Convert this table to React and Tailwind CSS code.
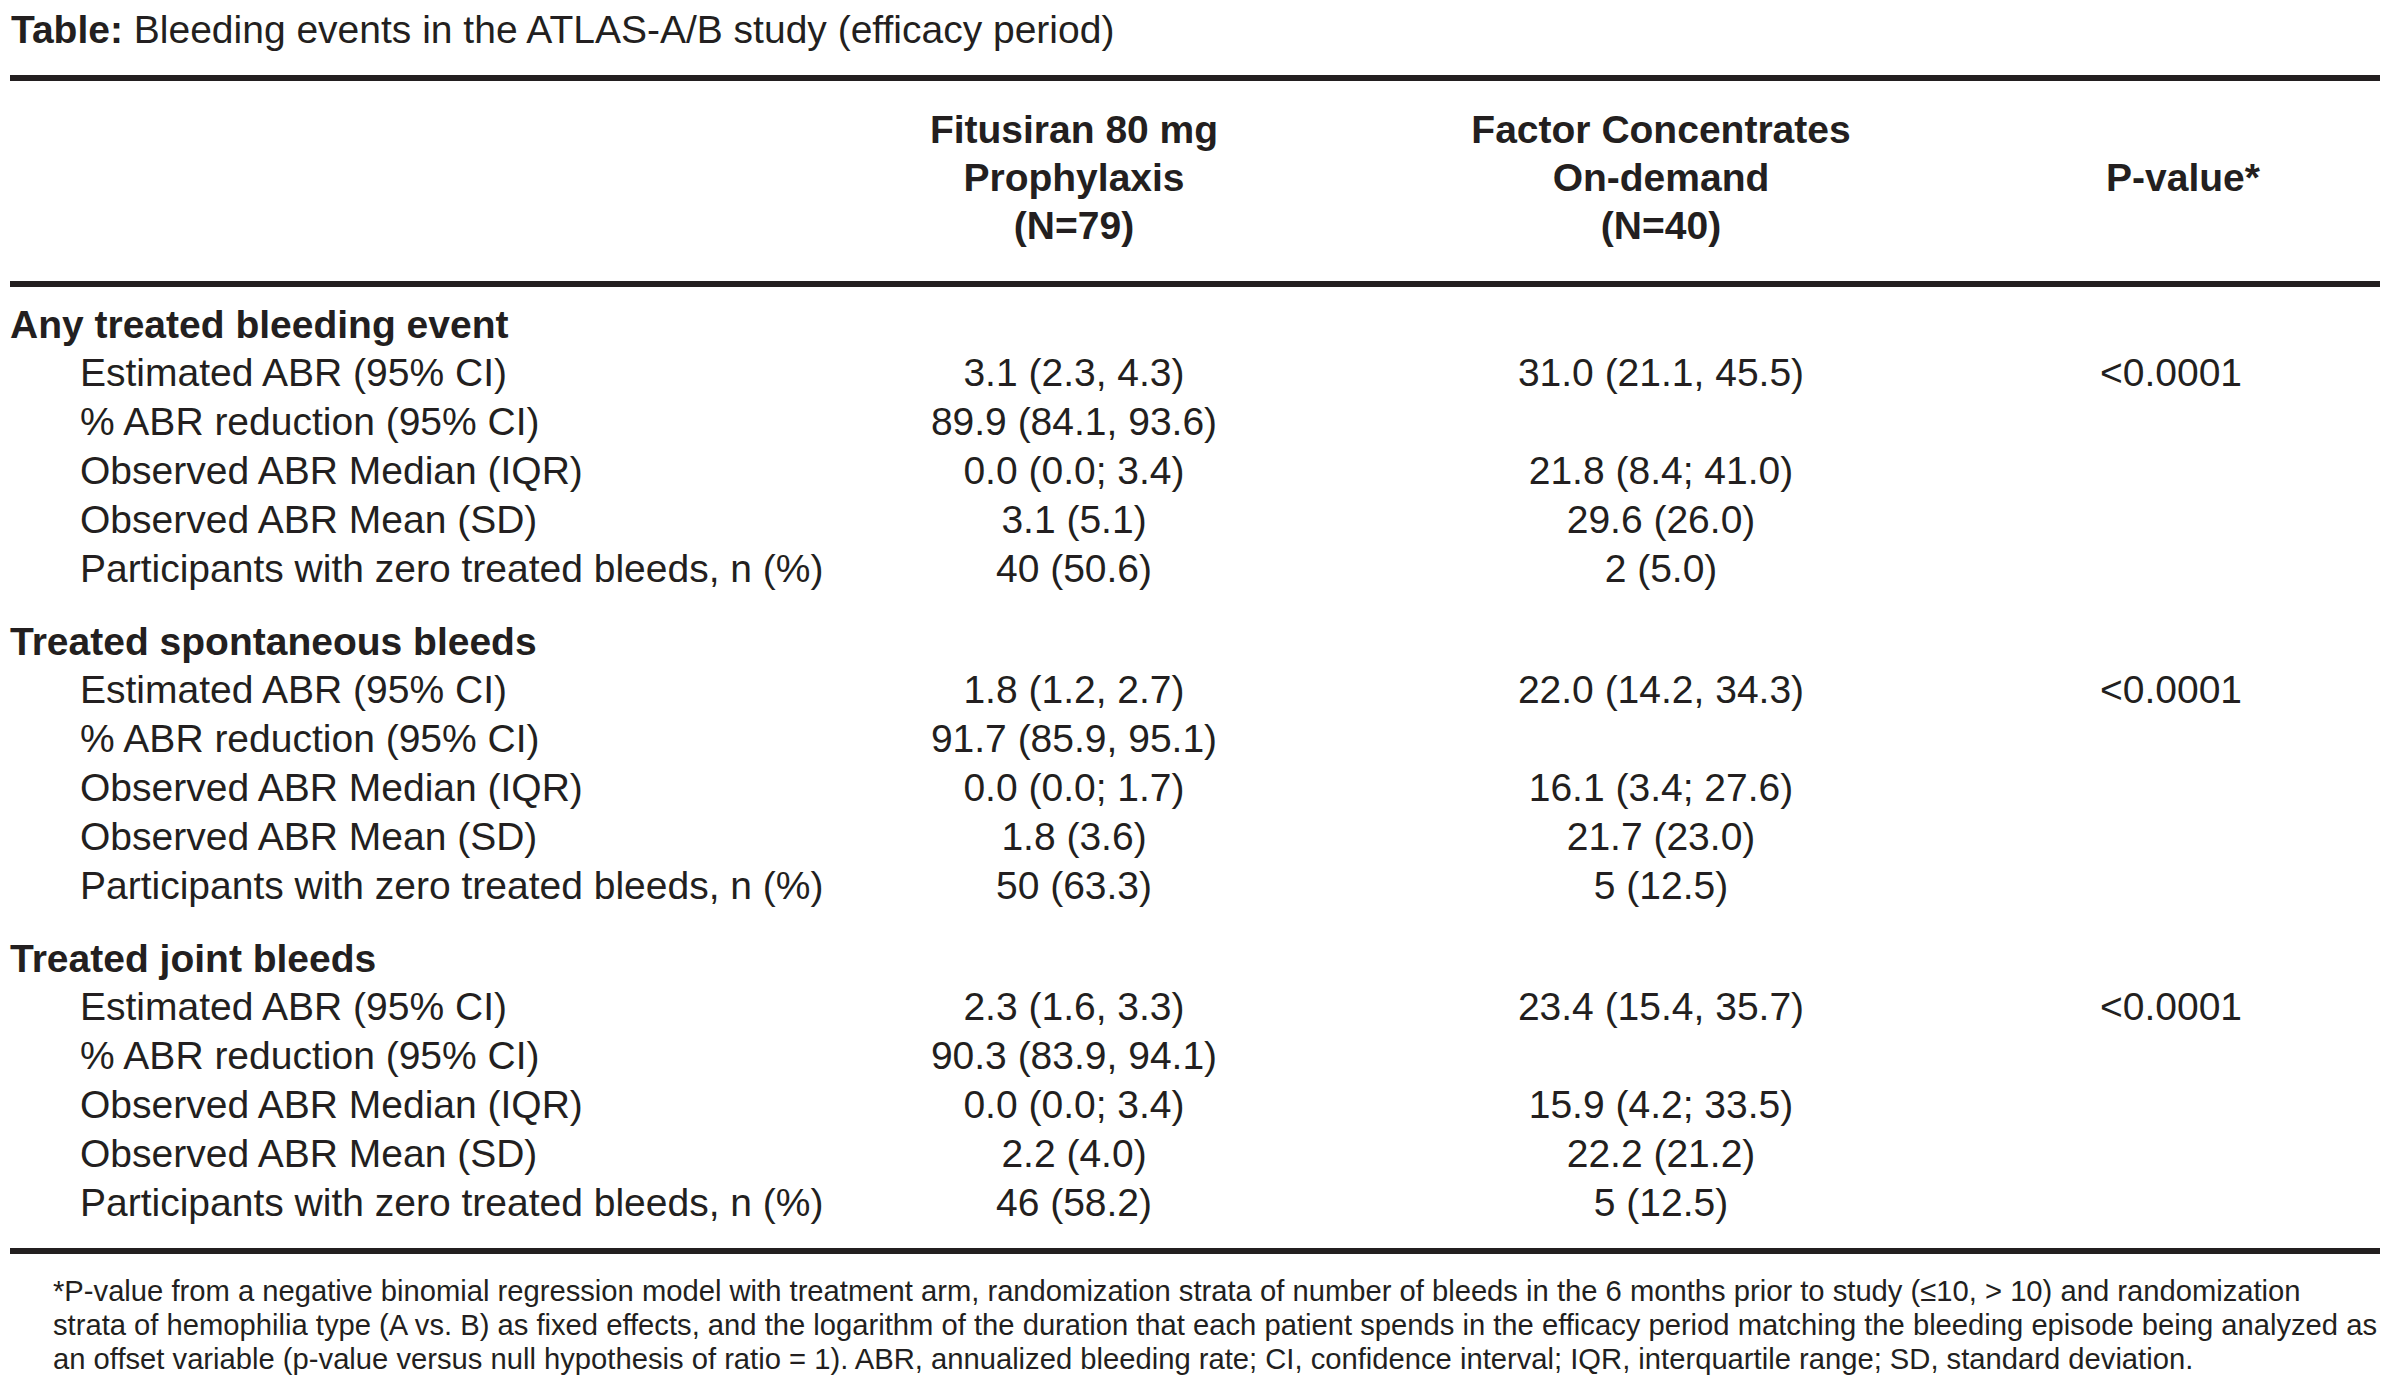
import React from "react";

const sections = [
  {
    title: "Any treated bleeding event",
    rows: [
      ["Estimated ABR (95% CI)", "3.1 (2.3, 4.3)", "31.0 (21.1, 45.5)", "<0.0001"],
      ["% ABR reduction (95% CI)", "89.9 (84.1, 93.6)", "", ""],
      ["Observed ABR Median (IQR)", "0.0 (0.0; 3.4)", "21.8 (8.4; 41.0)", ""],
      ["Observed ABR Mean (SD)", "3.1 (5.1)", "29.6 (26.0)", ""],
      ["Participants with zero treated bleeds, n (%)", "40 (50.6)", "2 (5.0)", ""],
    ],
  },
  {
    title: "Treated spontaneous bleeds",
    rows: [
      ["Estimated ABR (95% CI)", "1.8 (1.2, 2.7)", "22.0 (14.2, 34.3)", "<0.0001"],
      ["% ABR reduction (95% CI)", "91.7 (85.9, 95.1)", "", ""],
      ["Observed ABR Median (IQR)", "0.0 (0.0; 1.7)", "16.1 (3.4; 27.6)", ""],
      ["Observed ABR Mean (SD)", "1.8 (3.6)", "21.7 (23.0)", ""],
      ["Participants with zero treated bleeds, n (%)", "50 (63.3)", "5 (12.5)", ""],
    ],
  },
  {
    title: "Treated joint bleeds",
    rows: [
      ["Estimated ABR (95% CI)", "2.3 (1.6, 3.3)", "23.4 (15.4, 35.7)", "<0.0001"],
      ["% ABR reduction (95% CI)", "90.3 (83.9, 94.1)", "", ""],
      ["Observed ABR Median (IQR)", "0.0 (0.0; 3.4)", "15.9 (4.2; 33.5)", ""],
      ["Observed ABR Mean (SD)", "2.2 (4.0)", "22.2 (21.2)", ""],
      ["Participants with zero treated bleeds, n (%)", "46 (58.2)", "5 (12.5)", ""],
    ],
  },
];

const cols = "grid grid-cols-[770px_588px_586px_426px]";

export default function App() {
  return (
    <div
      className="min-h-screen w-[2398px] bg-white text-[#231f20]"
      style={{ fontFamily: '"Liberation Sans", Arial, sans-serif' }}
    >
      <div className="ml-[10px] w-[2370px] pt-[7px]">
        <div className="pl-[1px] text-[39px] leading-[46px] whitespace-nowrap">
          <span className="font-bold">Table:</span> Bleeding events in the ATLAS-A/B study (efficacy period)
        </div>

        <div className="mt-[22px] h-[6px] bg-[#231f20]" />

        <div className={`${cols} pt-[25px] pb-[31px] text-[39px] leading-[48px] font-bold`}>
          <div />
          <div className="text-center">
            Fitusiran 80 mg
            <br />
            Prophylaxis
            <br />
            (N=79)
          </div>
          <div className="text-center">
            Factor Concentrates
            <br />
            On-demand
            <br />
            (N=40)
          </div>
          <div className="flex items-center justify-center pl-[32px]">P-value*</div>
        </div>

        <div className="h-[6px] bg-[#231f20]" />

        <div className="pt-[14px] pb-[21px] text-[39px]">
          {sections.map((s, si) => (
            <div key={si} className={si > 0 ? "mt-[25px]" : ""}>
              <div className="font-bold leading-[47px] whitespace-nowrap">{s.title}</div>
              {s.rows.map((r, ri) => (
                <div key={ri} className={`${cols} leading-[49px] whitespace-nowrap`}>
                  <div className="pl-[70px]">{r[0]}</div>
                  <div className="text-center">{r[1]}</div>
                  <div className="text-center">{r[2]}</div>
                  <div className="text-center pl-[8px]">{r[3]}</div>
                </div>
              ))}
            </div>
          ))}
        </div>

        <div className="h-[6px] bg-[#231f20]" />

        <div className="pt-[20px] pl-[43px] text-[29.2px] leading-[34px] whitespace-nowrap">
          *P-value from a negative binomial regression model with treatment arm, randomization strata of number of bleeds in the 6 months prior to study (≤10, &gt; 10) and randomization
          <br />
          strata of hemophilia type (A vs. B) as fixed effects, and the logarithm of the duration that each patient spends in the efficacy period matching the bleeding episode being analyzed as
          <br />
          an offset variable (p-value versus null hypothesis of ratio = 1). ABR, annualized bleeding rate; CI, confidence interval; IQR, interquartile range; SD, standard deviation.
        </div>
      </div>
    </div>
  );
}
